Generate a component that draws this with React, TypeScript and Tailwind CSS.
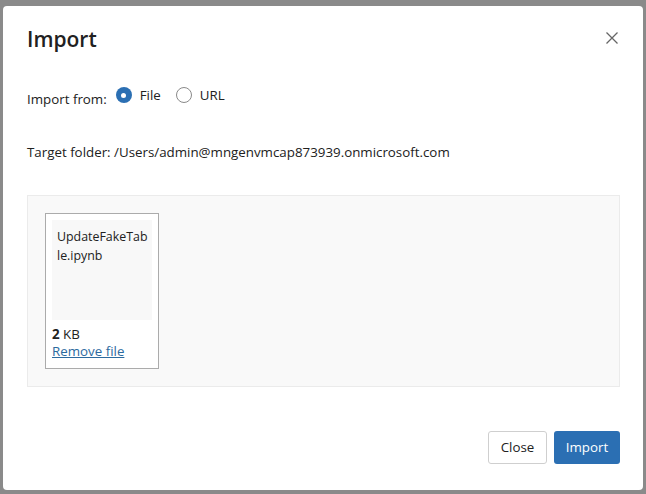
import React from "react";

export default function App() {
  const font = { fontFamily: '"Open Sans", "Noto Sans", sans-serif' };
  return (
    <div
      className="relative w-[646px] h-[494px] bg-[#8a8a8a] overflow-hidden pt-[6px] pl-[3px]"
      style={font}
    >
      <div className="relative w-[640px] h-[484px] bg-white rounded-[4px] pl-[24px] pr-[23px] flex flex-col text-[#212121]">
        <button className="absolute right-[25px] top-[26px] w-[12px] h-[12px] text-[#666]" aria-label="Close">
          <svg viewBox="0 0 12 12" width="12" height="12">
            <path d="M0.5 0.5 L11.5 11.5 M11.5 0.5 L0.5 11.5" stroke="currentColor" strokeWidth="1.3" fill="none" />
          </svg>
        </button>

        <h1 className="mt-[19px] h-[28px] leading-[28px] text-[21px] font-semibold">Import</h1>

        <div className="mt-[32px] h-[20px] flex items-start text-[13.33px]">
          <span className="mt-[4px] leading-[20px]">Import from:</span>
          <div className="ml-[9px] h-[20px] flex items-center">
            <span className="w-[16px] h-[16px] rounded-full bg-[#2b6fb3] flex items-center justify-center">
              <span className="w-[5px] h-[5px] rounded-full bg-white" />
            </span>
            <span className="ml-[8px] leading-[20px]">File</span>
          </div>
          <div className="ml-[15px] h-[20px] flex items-center">
            <span className="w-[16px] h-[16px] rounded-full border border-[#8a8a8a] bg-white" />
            <span className="ml-[8px] leading-[20px]">URL</span>
          </div>
        </div>

        <div className="mt-[37px] h-[20px] leading-[20px] text-[13.33px] whitespace-nowrap">
          Target folder: /Users/admin@mngenvmcap873939.onmicrosoft.com
        </div>

        <div className="mt-[33px] w-[593px] h-[192px] bg-[#f9f9f9] border border-[#ebebeb] p-[17px]">
          <div className="w-[114px] h-[156px] bg-white border border-[#ababab] p-[6px] flex flex-col text-[13.33px]">
            <div className="w-[100px] h-[100px] shrink-0 bg-[#f8f8f8] pt-[7px] px-[5px] text-[12.4px] leading-[19px] whitespace-nowrap">
              UpdateFakeTab
              <br />
              le.ipynb
            </div>
            <div className="mt-[6px] leading-[17px]">
              <span className="font-bold">2</span> KB
            </div>
            <a href="#" className="leading-[17px] text-[#2c6a9e] underline">
              Remove file
            </a>
          </div>
        </div>

        <div className="mt-[44px] flex justify-end gap-[7px] text-[13.33px]">
          <button className="w-[59px] h-[33px] rounded-[3px] border border-[#cfcfcf] bg-white text-[#212121]">
            Close
          </button>
          <button className="w-[66px] h-[33px] rounded-[3px] bg-[#2b6fb3] text-white">
            Import
          </button>
        </div>
      </div>
    </div>
  );
}
